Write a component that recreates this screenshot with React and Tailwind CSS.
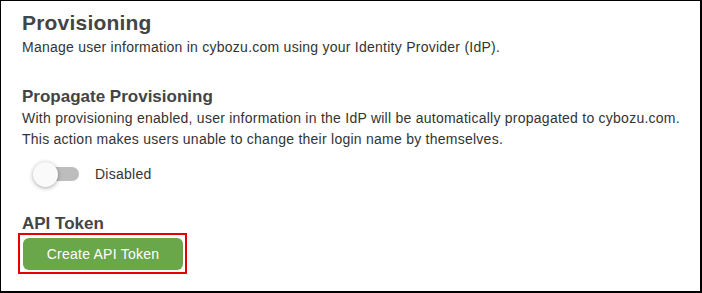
export default function App() {
  return (
    <div className="w-[702px] h-[293px] bg-white border-t border-l border-r-2 border-b-2 border-black font-['Liberation_Sans',Arial,sans-serif] text-[#333] overflow-hidden">
      <div className="pl-[21px] pt-[8px]">
        {/* Provisioning */}
        <h1 className="text-[21px] leading-[28px] font-bold text-[#444] tracking-[0.2px]">Provisioning</h1>
        <p className="text-[14px] leading-[20px] tracking-[0.25px]">
          Manage user information in cybozu.com using your Identity Provider (IdP).
        </p>

        {/* Propagate Provisioning */}
        <h2 className="text-[17px] leading-[22px] font-bold text-[#444] mt-[29px]">Propagate Provisioning</h2>
        <p className="text-[14px] leading-[21px] tracking-[0.25px]">
          With provisioning enabled, user information in the IdP will be automatically propagated to cybozu.com.
          <br />
          This action makes users unable to change their login name by themselves.
        </p>

        <div className="flex items-center mt-[11px] ml-[11px] h-[26px]">
          <div className="relative w-[46px] h-[26px] flex items-center">
            <div className="ml-[6px] w-[40px] h-[14px] rounded-full bg-[#bdbdbd]" />
            <div className="absolute left-0 top-[1px] w-[25px] h-[25px] rounded-full bg-[#fafafa] shadow-[0_1px_4px_rgba(0,0,0,0.35)]" />
          </div>
          <span className="ml-[16px] text-[14px] tracking-[0.25px]">Disabled</span>
        </div>

        {/* API Token */}
        <h2 className="text-[17px] leading-[20px] font-bold text-[#444] mt-[27px]">API Token</h2>
        <div className="ml-[-4px] mt-[-1px] w-[169px] h-[41px] border-2 border-[#e60000] pt-[3px] pl-[3px] pr-[2px] pb-[2px]">
          <button className="w-full h-full rounded-[6px] bg-[#6aa64a] text-white text-[14px] tracking-[0.25px]">
            Create API Token
          </button>
        </div>
      </div>
    </div>
  );
}
